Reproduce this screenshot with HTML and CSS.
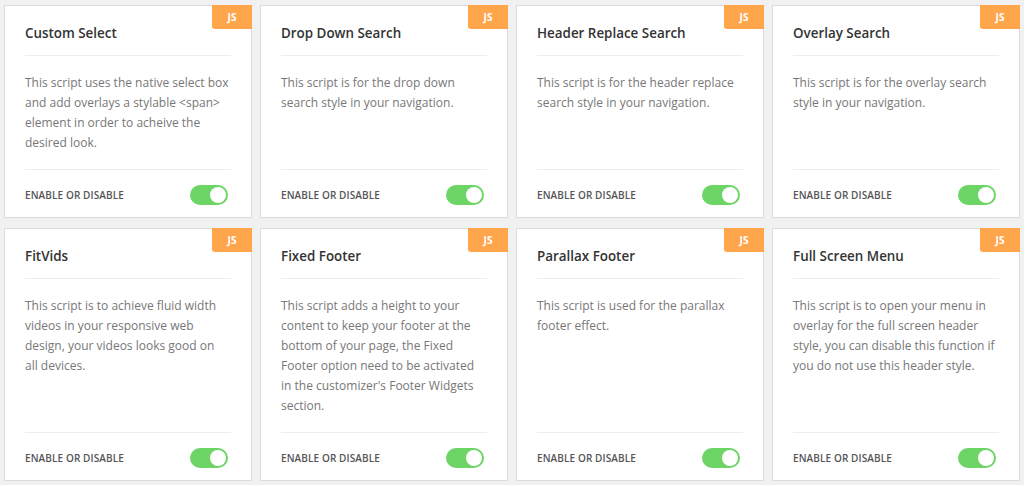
FILE: index.html
```html
<!DOCTYPE html>
<html lang="en">
<head>
  <meta charset="UTF-8">
  <title>Scripts</title>
  <link rel="stylesheet" href="styles.css">
</head>
<body>
  <div class="modules">

    <div class="module">
      <span class="badge">JS</span>
      <h3 class="module-title">Custom Select</h3>
      <p class="module-desc">This script uses the native select box and add overlays a stylable &lt;span&gt; element in order to acheive the desired look.</p>
      <div class="module-footer">
        <span class="label">Enable or disable</span>
        <label class="switch"><input type="checkbox" checked><span class="slider"></span></label>
      </div>
    </div>

    <div class="module">
      <span class="badge">JS</span>
      <h3 class="module-title">Drop Down Search</h3>
      <p class="module-desc">This script is for the drop down search style in your navigation.</p>
      <div class="module-footer">
        <span class="label">Enable or disable</span>
        <label class="switch"><input type="checkbox" checked><span class="slider"></span></label>
      </div>
    </div>

    <div class="module">
      <span class="badge">JS</span>
      <h3 class="module-title">Header Replace Search</h3>
      <p class="module-desc">This script is for the header replace search style in your navigation.</p>
      <div class="module-footer">
        <span class="label">Enable or disable</span>
        <label class="switch"><input type="checkbox" checked><span class="slider"></span></label>
      </div>
    </div>

    <div class="module">
      <span class="badge">JS</span>
      <h3 class="module-title">Overlay Search</h3>
      <p class="module-desc">This script is for the overlay search style in your navigation.</p>
      <div class="module-footer">
        <span class="label">Enable or disable</span>
        <label class="switch"><input type="checkbox" checked><span class="slider"></span></label>
      </div>
    </div>

    <div class="module">
      <span class="badge">JS</span>
      <h3 class="module-title">FitVids</h3>
      <p class="module-desc">This script is to achieve fluid width videos in your responsive web design, your videos looks good on<br>all devices.</p>
      <div class="module-footer">
        <span class="label">Enable or disable</span>
        <label class="switch"><input type="checkbox" checked><span class="slider"></span></label>
      </div>
    </div>

    <div class="module">
      <span class="badge">JS</span>
      <h3 class="module-title">Fixed Footer</h3>
      <p class="module-desc">This script adds a height to your content to keep your footer at the bottom of your page, the Fixed Footer option need to be activated in the customizer's Footer Widgets section.</p>
      <div class="module-footer">
        <span class="label">Enable or disable</span>
        <label class="switch"><input type="checkbox" checked><span class="slider"></span></label>
      </div>
    </div>

    <div class="module">
      <span class="badge">JS</span>
      <h3 class="module-title">Parallax Footer</h3>
      <p class="module-desc">This script is used for the parallax footer effect.</p>
      <div class="module-footer">
        <span class="label">Enable or disable</span>
        <label class="switch"><input type="checkbox" checked><span class="slider"></span></label>
      </div>
    </div>

    <div class="module">
      <span class="badge">JS</span>
      <h3 class="module-title">Full Screen Menu</h3>
      <p class="module-desc">This script is to open your menu in overlay for the full screen header style, you can disable this function if you do not use this header style.</p>
      <div class="module-footer">
        <span class="label">Enable or disable</span>
        <label class="switch"><input type="checkbox" checked><span class="slider"></span></label>
      </div>
    </div>

  </div>
</body>
</html>
```
FILE: styles.css
```css
body {
  margin: 0;
  padding: 5px 4px 0;
  background: #f1f1f1;
  font-family: "Open Sans", "Noto Sans", sans-serif;
}

.modules {
  display: grid;
  grid-template-columns: repeat(4, 1fr);
  column-gap: 8px;
  row-gap: 10px;
}

.module {
  position: relative;
  display: flex;
  flex-direction: column;
  background: #fff;
  border: 1px solid #dcdcdc;
  padding: 0 20px;
}

.badge {
  position: absolute;
  top: -1px;
  right: -1px;
  width: 40px;
  height: 24px;
  line-height: 24px;
  text-align: center;
  background: #ffa64d;
  color: #fff;
  font-size: 10px;
  font-weight: 700;
  border-bottom-left-radius: 3px;
}

.module-title {
  margin: 0;
  padding: 17px 0 12px;
  font-size: 13.4px;
  line-height: 20px;
  font-weight: 600;
  color: #333;
  border-bottom: 1px solid #ececec;
}

.module-desc {
  flex: 1;
  margin: 0;
  padding: 17px 0 16px;
  font-size: 12px;
  line-height: 20px;
  color: #777;
}

.module-footer {
  display: flex;
  align-items: center;
  justify-content: space-between;
  padding: 15px 3px 12px 0;
  border-top: 1px solid #ececec;
}

.label {
  font-size: 10px;
  font-weight: 600;
  text-transform: uppercase;
  letter-spacing: 0.1px;
  color: #555;
}

.switch {
  position: relative;
  display: block;
  width: 38px;
  height: 20px;
}

.switch input {
  display: none;
}

.slider {
  position: absolute;
  inset: 0;
  background: #ccc;
  border-radius: 10px;
}

.slider::after {
  content: "";
  position: absolute;
  top: 2px;
  left: 2px;
  width: 16px;
  height: 16px;
  border-radius: 50%;
  background: #fff;
}

.switch input:checked + .slider {
  background: #6cd565;
}

.switch input:checked + .slider::after {
  left: 20px;
}
```
